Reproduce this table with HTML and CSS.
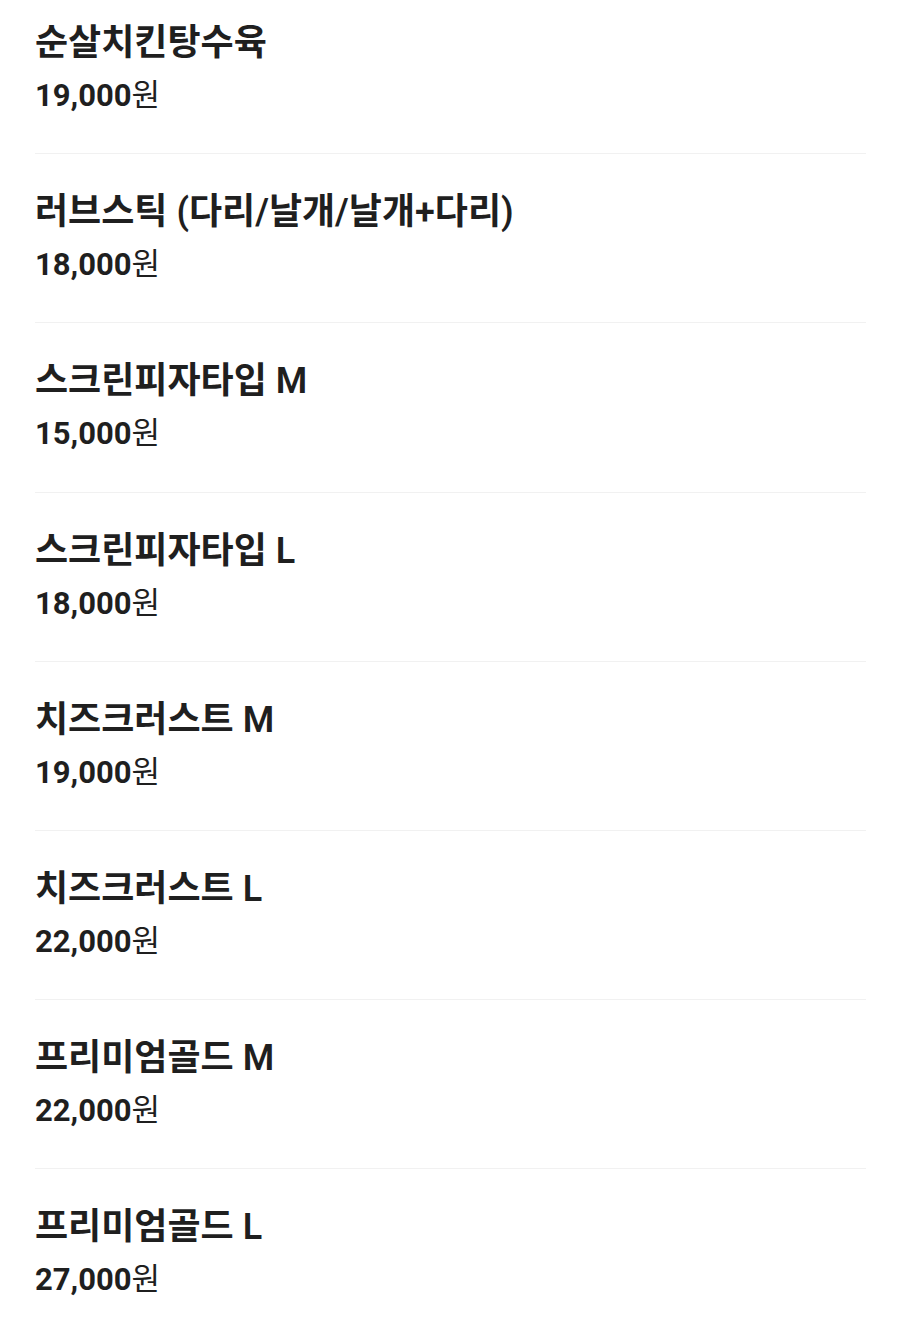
FILE: index.html
```html
<!DOCTYPE html>
<html lang="ko">
<head>
<meta charset="utf-8">
<link rel="stylesheet" href="styles.css">
</head>
<body>
<ul class="menu">
  <li class="item"><div class="name">순살치킨탕수육</div><div class="price"><span class="num">19,000</span><span class="won">원</span></div></li>
  <li class="item"><div class="name">러브스틱 (다리/날개/날개+다리)</div><div class="price"><span class="num">18,000</span><span class="won">원</span></div></li>
  <li class="item"><div class="name">스크린피자타입 M</div><div class="price"><span class="num">15,000</span><span class="won">원</span></div></li>
  <li class="item"><div class="name">스크린피자타입 L</div><div class="price"><span class="num">18,000</span><span class="won">원</span></div></li>
  <li class="item"><div class="name">치즈크러스트 M</div><div class="price"><span class="num">19,000</span><span class="won">원</span></div></li>
  <li class="item"><div class="name">치즈크러스트 L</div><div class="price"><span class="num">22,000</span><span class="won">원</span></div></li>
  <li class="item"><div class="name">프리미엄골드 M</div><div class="price"><span class="num">22,000</span><span class="won">원</span></div></li>
  <li class="item"><div class="name">프리미엄골드 L</div><div class="price"><span class="num">27,000</span><span class="won">원</span></div></li>
</ul>
</body>
</html>
```
FILE: styles.css
```css
html, body {
  margin: 0;
  padding: 0;
  background: #ffffff;
  overflow: hidden;
}
body {
  font-family: Roboto, "Noto Sans CJK KR", sans-serif;
  color: #1f1f1f;
}
.menu {
  list-style: none;
  margin: -15px 34px 0 35px;
  padding: 0;
}
.item {
  height: 169.2px;
  box-sizing: border-box;
  padding-top: 36px;
  border-bottom: 1.5px solid #f1f1f1;
}
.name {
  font-size: 36px;
  line-height: 44px;
  font-weight: 600;
  letter-spacing: 0;
  white-space: nowrap;
}
.price {
  margin-top: 11px;
  line-height: 40px;
  white-space: nowrap;
}
.num {
  font-size: 31px;
  font-weight: 700;
}
.won {
  font-size: 31px;
  font-weight: 400;
}
```
